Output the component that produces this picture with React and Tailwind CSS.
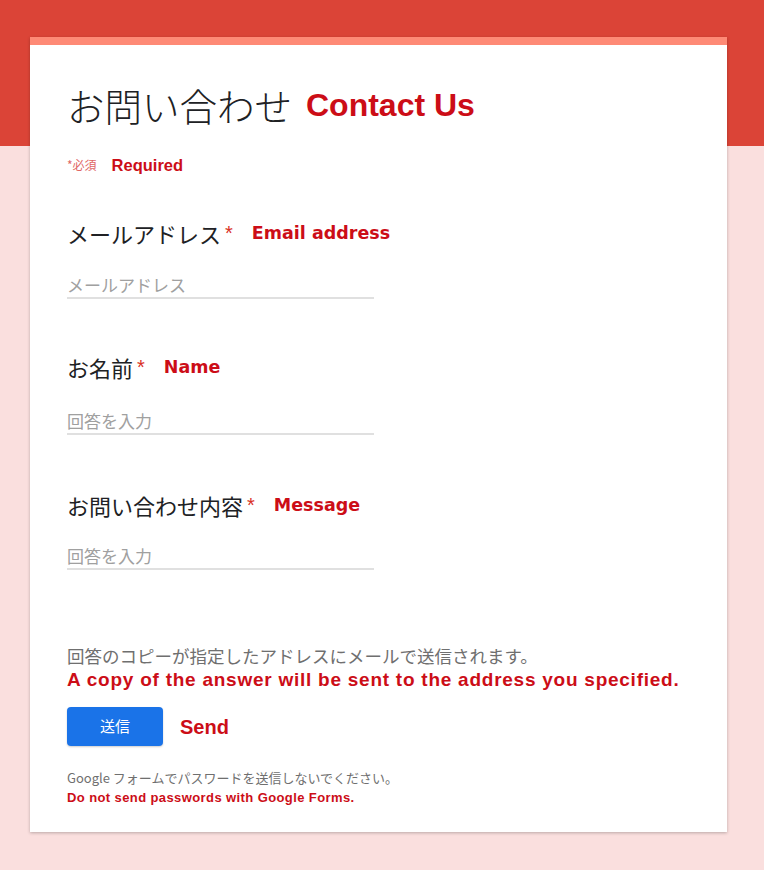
import React from 'react';

const jp = "font-['Noto_Sans_CJK_JP','Noto_Sans',sans-serif]";
const en = "font-['Liberation_Sans',Arial,sans-serif]";
const wide = "font-['DejaVu_Sans',Verdana,sans-serif]";

function Field({ label, english, placeholder, labelGap, inputGap }) {
  return (
    <div className={labelGap}>
      <div className="flex items-center h-[28px]">
        <span className={`${jp} text-[22px] text-[#202124] leading-[28px]`}>{label}</span>
        <span className={`${en} text-[20px] text-[#d93025] ml-[4px] leading-[28px]`}>*</span>
        <span className={`${wide} text-[17.5px] font-bold text-[#cc0d17] ml-[19px] leading-[28px]`}>
          {english}
        </span>
      </div>
      <div
        className={`${jp} ${inputGap} w-[307px] border-b-2 border-[#e0e0e0] text-[17px] leading-[24px] text-[#a0a0a0]`}
      >
        {placeholder}
      </div>
    </div>
  );
}

export default function App() {
  return (
    <div className="min-h-[870px] bg-[linear-gradient(to_bottom,#db4437_146px,#fadfde_146px)] pt-[37px]">
      <div className="ml-[30px] w-[697px] bg-white shadow-[0_1px_3px_rgba(0,0,0,0.25)]">
        <div className="h-[8px] bg-[#fe8a76]" />
        <div className="px-[37px] pt-[40px] pb-[25px]">
          <div className="flex items-center h-[40px]">
            <span className={`${jp} font-light text-[37.5px] text-[#202124] leading-[40px]`}>お問い合わせ</span>
            <span className={`${en} text-[32px] font-bold text-[#cc0d17] ml-[14px] leading-[40px]`}>
              Contact Us
            </span>
          </div>

          <div className="flex items-center h-[20px] mt-[30px]">
            <span className={`${jp} text-[12px] text-[#e06666]`}>*必須</span>
            <span className={`${en} text-[16.5px] font-bold text-[#cc0d17] ml-[15px]`}>Required</span>
          </div>

          <Field
            label="メールアドレス"
            english="Email address"
            placeholder="メールアドレス"
            labelGap="mt-[44px]"
            inputGap="mt-[26px]"
          />
          <Field label="お名前" english="Name" placeholder="回答を入力" labelGap="mt-[54px]" inputGap="mt-[28px]" />
          <Field
            label="お問い合わせ内容"
            english="Message"
            placeholder="回答を入力"
            labelGap="mt-[56px]"
            inputGap="mt-[25px]"
          />

          <div className={`${jp} mt-[75px] text-[17.5px] leading-[22px] text-[#6f6f6f]`}>
            回答のコピーが指定したアドレスにメールで送信されます。
          </div>
          <div className={`${en} mt-[1px] text-[19px] tracking-[0.75px] leading-[24px] font-bold text-[#cc0d17]`}>
            A copy of the answer will be sent to the address you specified.
          </div>

          <div className="flex items-center mt-[15px]">
            <button
              className={`${jp} w-[96px] h-[39px] rounded-[4px] bg-[#1a73e8] text-white text-[15px] shadow-[0_1px_2px_rgba(0,0,0,0.2)]`}
            >
              送信
            </button>
            <span className={`${en} ml-[17px] text-[20px] font-bold text-[#cc0d17]`}>Send</span>
          </div>

          <div className={`${jp} mt-[23px] text-[13px] leading-[18px] text-[#6f6f6f]`}>
            Google フォームでパスワードを送信しないでください。
          </div>
          <div className={`${en} mt-[2px] text-[13px] tracking-[0.4px] leading-[18px] font-bold text-[#cc0d17]`}>
            Do not send passwords with Google Forms.
          </div>
        </div>
      </div>
    </div>
  );
}
